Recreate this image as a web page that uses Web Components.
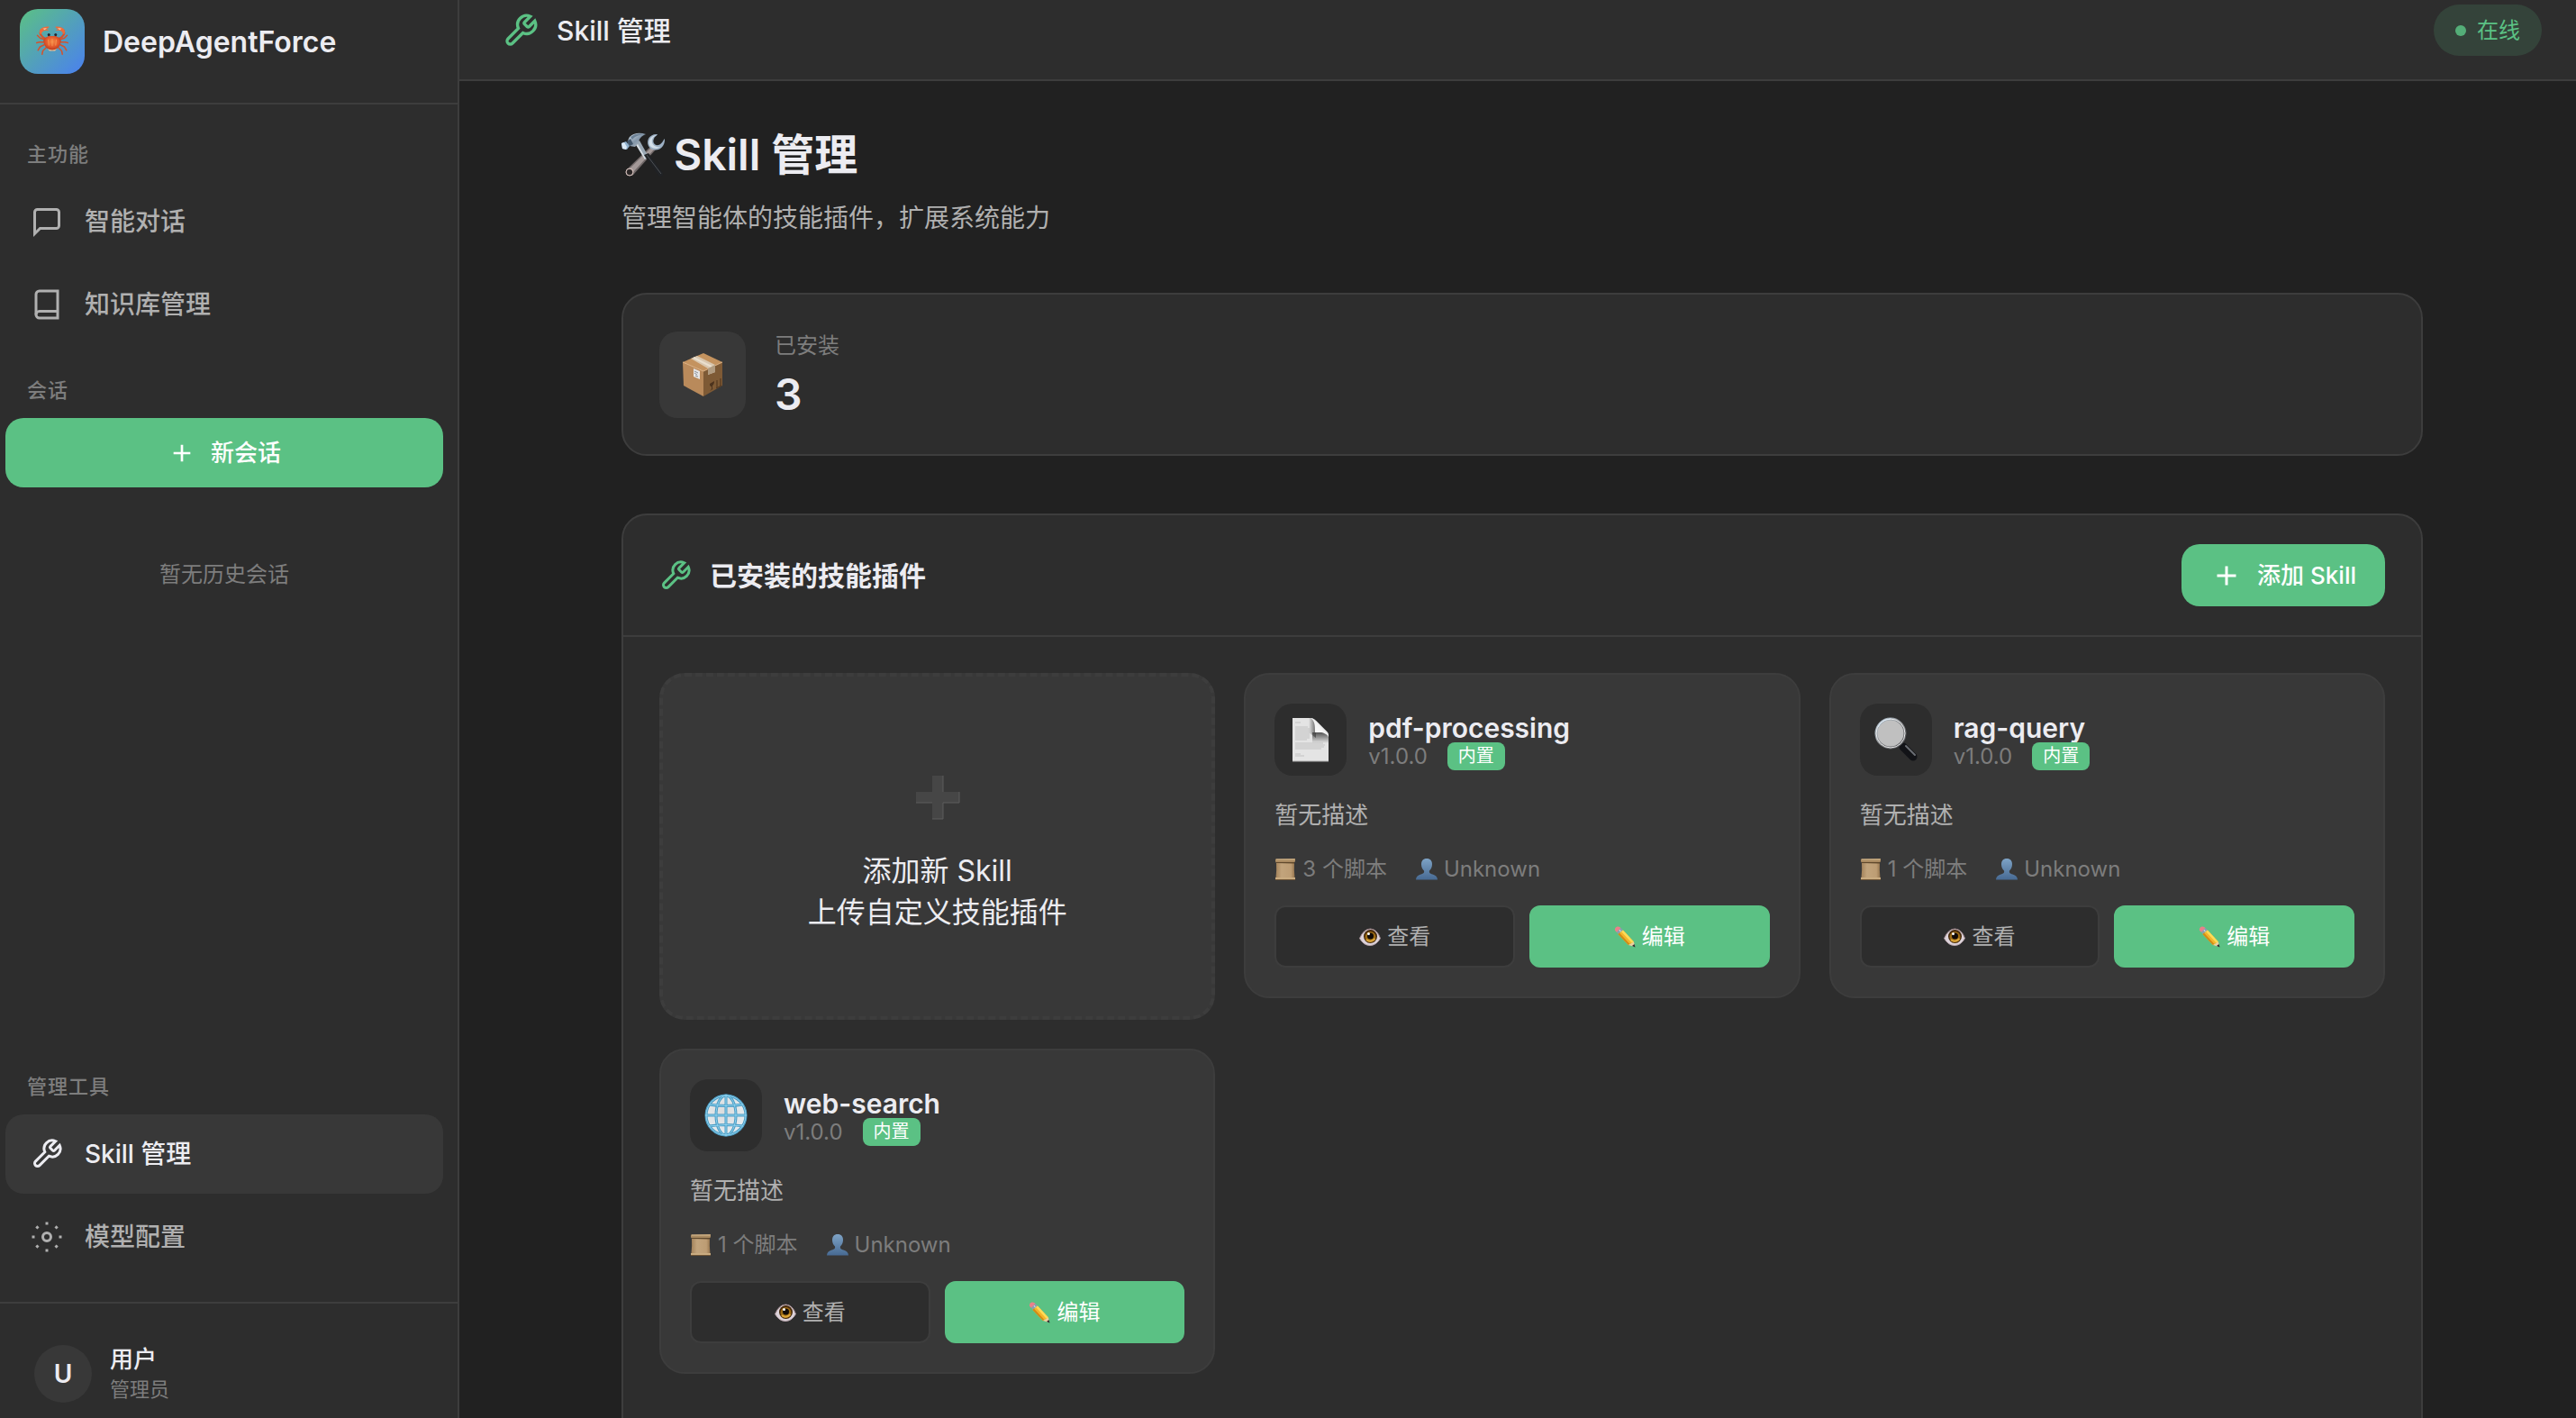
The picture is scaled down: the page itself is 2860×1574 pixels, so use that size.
<!DOCTYPE html>
<html lang="zh-CN">
<head>
<meta charset="UTF-8">
<meta name="viewport" content="width=device-width, initial-scale=1.0">
<title>DeepAgentForce</title>
<style>
    :root {
        --bg: #212121;
        --panel: #2d2d2d;
        --raised: #383838;
        --line: #3d3d3d;
        --text: #ececf1;
        --text-2: #b0b0b0;
        --text-3: #7d7d7d;
        --green: #5bc184;
    }

    body {
        margin: 0;
        background: var(--bg);
        color: var(--text);
        font-family: Inter, "Noto Sans CJK SC", sans-serif;
        font-size: 28px;
    }
</style>
</head>
<body>
<app-shell></app-shell>

<script>
// line icons, 24 x 24
const LINE_ICONS = {
    chat: '<path d="M21 15a2 2 0 0 1-2 2H7l-4 4V5a2 2 0 0 1 2-2h14a2 2 0 0 1 2 2z"/>',
    book: '<path d="M4 19.5A2.5 2.5 0 0 1 6.5 17H20"/><path d="M6.5 2H20v20H6.5A2.5 2.5 0 0 1 4 19.5v-15A2.5 2.5 0 0 1 6.5 2z"/>',
    plus: '<path d="M12 5v14M5 12h14"/>',
    wrench: '<path d="M14.7 6.3a1 1 0 0 0 0 1.4l1.6 1.6a1 1 0 0 0 1.4 0l3.77-3.77a6 6 0 0 1-7.94 7.94l-6.91 6.91a2.12 2.12 0 0 1-3-3l6.91-6.91a6 6 0 0 1 7.94-7.94l-3.76 3.76z"/>',
    gear: '<circle cx="12" cy="12" r="3"/><path d="M12 1v2M12 21v2M4.22 4.22l1.42 1.42M18.36 18.36l1.42 1.42M1 12h2M21 12h2M4.22 19.78l1.42-1.42M18.36 5.64l1.42-1.42"/>'
};

// coloured pictures, 48 x 48
const PICTURES = {
    crab: `
        <defs><radialGradient id="shell" cx=".5" cy=".4" r=".6"><stop offset="0" stop-color="#f58a45"/><stop offset=".6" stop-color="#e2582c"/><stop offset="1" stop-color="#b5391d"/></radialGradient></defs>
        <g fill="none" stroke="#d4522d" stroke-width="2" stroke-linecap="round" stroke-linejoin="round">
            <path d="M12 21L6 19L2 15M11 25H5L1 26M12 29L6 32L3 37M15 33L10 38L9 43M36 21L42 19L46 15M37 25H43L47 26M36 29L42 32L45 37M33 33L38 38L39 43"/>
            <path d="M14 20C8 17 5 13 7 8M34 20C40 17 43 13 41 8" stroke-width="3"/>
        </g>
        <path d="M6 13C3 7 9 1 19 2C20 4 16 5 15 6C18 6 19 7 18 8C12 7 9 9 8 13ZM42 13C45 7 39 1 29 2C28 4 32 5 33 6C30 6 29 7 30 8C36 7 39 9 40 13Z" fill="#ee6b3a"/>
        <path d="M10 5l6-1-3 3zM38 5l-6-1 3 3z" fill="#f9c9a0"/>
        <path d="M19 20v-5M29 20v-5" stroke="#b5391d" stroke-width="2"/>
        <circle cx="19" cy="14" r="2" fill="#26262e"/><circle cx="29" cy="14" r="2" fill="#26262e"/>
        <path d="M11 23C12 18 17 16 24 16S36 18 37 23C37 30 31 37 24 37S11 30 11 23Z" fill="url(#shell)"/>
        <path d="M18 21l1 9M24 20v11M30 21l-1 9" stroke="#f9a05c" stroke-width="1"/>
        <path d="M17 35C21 37 27 37 31 35L28 38H20Z" fill="#f2b98c"/>`,
    tools: `
        <defs><linearGradient id="steel" x1="0" y1="0" x2="1" y2="1"><stop offset="0" stop-color="#dde6ee"/><stop offset=".5" stop-color="#8295a8"/><stop offset="1" stop-color="#c3c8cd"/></linearGradient></defs>
        <path d="M33 14L38 18L14 45C12 48 7 48 5 45C4 42 6 40 8 38Z" fill="#716969"/>
        <path d="M34 15L37 17L13 43L8 40Z" fill="#a39998"/>
        <path d="M40 1C32 0 27 7 30 14C33 20 42 20 46 14C48 11 48 8 48 6C46 8 45 12 41 13C37 14 34 10 36 6C37 3 39 3 40 1Z" fill="#9cb0c4"/>
        <path d="M39 2C34 2 29 7 31 13C33 17 39 18 43 15C37 16 33 12 34 7C35 4 37 3 39 2Z" fill="#d3dfe9"/>
        <circle cx="9" cy="43" r="3" fill="#2b2626"/><circle cx="9" cy="43" r="4" fill="none" stroke="#d2bdb8" stroke-width="1"/>
        <path d="M15 11L20 8L30 26L26 29Z" fill="#9aa8b4"/><path d="M15 11L17 10L27 28L26 29Z" fill="#d8dfe5"/>
        <path d="M25 24L30 22L46 44C47 48 43 49 41 47Z" fill="#202225"/><path d="M28 24L44 45" stroke="#4d5156" stroke-width="1"/>
        <path d="M9 4C14 -1 21 -1 27 1C22 3 19 6 19 11L15 15L9 14C6 12 7 7 9 4Z" fill="url(#steel)"/>
        <path d="M10 4C15 0 20 0 25 1C18 2 14 4 12 7Z" fill="#6b8095"/>
        <path d="M0 11L5 9L9 14L6 18L1 17Z" fill="#8fb0cd"/><path d="M0 11L3 10L6 15L5 18L1 17Z" fill="#dbeaf7"/>
        <path d="M6 9L10 6L13 12L9 14Z" fill="#42566a"/>`,
    box: `
        <path d="M2 10L25 20V48L3 36Z" fill="#b98a5b"/>
        <path d="M25 20L46 10V36L25 48Z" fill="#7e5a35"/>
        <path d="M2 10L25 0L46 10L25 20Z" fill="#c4935f"/>
        <path d="M2 10L25 20L46 10" fill="none" stroke="#dfb487" stroke-width="1"/>
        <path d="M11 6L18 3L38 13V21L30 24V17Z" fill="#d9c7af"/>
        <path d="M14 5L34 15" stroke="#eadfce" stroke-width="2"/>
        <path d="M30 17L38 13V21L30 24Z" fill="#b09b80"/>
        <path d="M14 17L21 20V29L14 26Z" fill="#e6e6e6"/>
        <path d="M15 20l4 2M15 22l3 2M16 25l3 1" stroke="#8a8f96" stroke-width="1"/>
        <path d="M32 34L37 31C37 35 35 36 35 36V40L37 39L32 42L34 40V37C32 37 32 35 32 34Z" fill="#4c331d"/>
        <path d="M40 30v8M44 28v8M39 39l6-3" stroke="#4c331d" stroke-width="1"/>`,
    page: `
        <defs>
            <linearGradient id="left" x1="0" y1="0" x2="1" y2="0"><stop offset="0" stop-color="#444" stop-opacity="0"/><stop offset="1" stop-color="#444" stop-opacity=".8"/></linearGradient>
            <linearGradient id="below" x1="0" y1="0" x2="0" y2="1"><stop offset="0" stop-color="#444" stop-opacity=".9"/><stop offset="1" stop-color="#444" stop-opacity="0"/></linearGradient>
            <linearGradient id="flap" x1="0" y1="1" x2="1" y2="0"><stop offset="0" stop-color="#fff"/><stop offset=".5" stop-color="#f4f4f4"/><stop offset="1" stop-color="#aaa"/></linearGradient>
        </defs>
        <path d="M4 0H23C26 0 28 1 30 3L42 15C44 17 44 19 44 22V48H4Z" fill="#e4e4e4"/>
        <path d="M7 5h6M7 10h14M7 12h16M7 14h16M7 16h16M7 18h16M7 20h16M7 22h16M7 24h13M7 28h31M7 30h33M7 32h32M7 34h29M7 40h6M7 42h10" stroke="#c2c2c2" stroke-width="1"/>
        <path d="M22 0C26 0 28 1 30 3V22L22 16Z" fill="url(#left)"/>
        <path d="M26 16H42C44 18 44 20 44 28H26Z" fill="url(#below)"/>
        <path d="M24 0C29 3 29 9 29 16C36 15 42 17 44 21C44 18 44 17 42 15L30 3C28 1 26 0 24 0Z" fill="url(#flap)"/>
        <path d="M4 48H44" stroke="#a8a8a8" stroke-width="1"/>`,
    lens: `
        <defs><linearGradient id="rim" x1="0" y1="0" x2="1" y2="1"><stop offset="0" stop-color="#b9cad8"/><stop offset=".5" stop-color="#85878a"/><stop offset="1" stop-color="#4a4b4f"/></linearGradient></defs>
        <path d="M29 29L34 34" stroke="#a3a7ac" stroke-width="5"/>
        <path d="M32 32L43 43" stroke="#121317" stroke-width="9" stroke-linecap="round"/>
        <path d="M35 31L45 41" stroke="#6b6e74" stroke-width="2" stroke-linecap="round"/>
        <circle cx="18" cy="17" r="16" fill="#c0c0c0"/>
        <circle cx="18" cy="17" r="16" fill="none" stroke="url(#rim)" stroke-width="3"/>
        <circle cx="18" cy="17" r="16" fill="none" stroke="#ececec" stroke-width="1"/>
        <path d="M4 10A16 16 0 0 1 18 1" fill="none" stroke="#dbe9f5" stroke-width="1"/>`,
    globe: `
        <defs><radialGradient id="sea" cx=".45" cy=".4" r=".6"><stop offset="0" stop-color="#dcdcdc"/><stop offset="1" stop-color="#e6edf1"/></radialGradient></defs>
        <circle cx="24" cy="24" r="23" fill="url(#sea)"/>
        <g fill="none" stroke="#4b9cc4" stroke-width="3">
            <circle cx="24" cy="24" r="22"/><ellipse cx="24" cy="24" rx="11" ry="22"/>
            <path d="M24 1V47M1 24H47M5 12Q24 15 43 12M5 36Q24 33 43 36"/>
        </g>
        <g fill="none" stroke="#8fd3ef" stroke-width="1">
            <circle cx="24" cy="24" r="22"/><ellipse cx="24" cy="24" rx="11" ry="22"/>
            <path d="M24 1V47M1 24H47M5 12Q24 15 43 12M5 36Q24 33 43 36"/>
        </g>`,
    scroll: `
        <defs><linearGradient id="paper"><stop offset="0" stop-color="#a3825a"/><stop offset=".3" stop-color="#c2a47c"/><stop offset=".8" stop-color="#bd9d74"/><stop offset="1" stop-color="#94734c"/></linearGradient></defs>
        <path d="M4 8H44Q43 25 45 43H3Q5 25 4 8Z" fill="url(#paper)"/>
        <path d="M2 1L46 0V5Q46 9 42 9H6Q2 9 2 6Z" fill="#a98a61"/>
        <path d="M4 8H44V11L4 10Z" fill="#5f482c"/><path d="M4 2L45 2" stroke="#d6bb92" stroke-width="2"/>
        <path d="M2 42H46V47H2Z" fill="#c9ab80"/><path d="M2 47H46" stroke="#6f5535" stroke-width="2"/>`,
    person: `
        <defs><linearGradient id="blue" x1="0" y1="0" x2="0" y2="1"><stop offset="0" stop-color="#7ea3c6"/><stop offset="1" stop-color="#476a93"/></linearGradient></defs>
        <path d="M24 0C32 0 36 5 36 13C36 20 33 24 30 27C29 32 31 33 37 35C44 37 48 41 48 47H0C0 41 4 37 11 35C17 33 19 32 18 27C15 24 12 20 12 13C12 5 16 0 24 0Z" fill="url(#blue)"/>`,
    eye: `
        <path d="M1 27Q10 6 25 6Q40 7 47 27Q38 43 24 43Q10 43 1 27Z" fill="#dcd3da"/>
        <path d="M1 27Q10 6 25 6Q40 7 47 27" fill="none" stroke="#9a8288" stroke-width="2"/>
        <path d="M1 27Q10 43 24 43Q38 43 47 27" fill="none" stroke="#b3a0a7" stroke-width="2"/>
        <circle cx="25" cy="23" r="15" fill="#45290c"/><circle cx="25" cy="24" r="12" fill="#9c6b15"/>
        <path d="M16 30Q25 38 35 28" fill="none" stroke="#dca63a" stroke-width="4"/>
        <circle cx="25" cy="22" r="7" fill="#120b08"/><circle cx="21" cy="17" r="3" fill="#fff"/>`,
    pencil: `
        <path d="M2 9Q1 3 7 1Q12 0 15 4L9 14Q4 14 2 9Z" fill="#e9818a"/>
        <path d="M15 4L20 9L9 18L6 13Z" fill="#8c9db0"/><path d="M12 8L15 13" stroke="#dbe3ea" stroke-width="2"/>
        <path d="M20 9L44 35L32 42L9 18Z" fill="#f4b62c"/>
        <path d="M20 9L44 35L40 38L16 12Z" fill="#ffdb58"/><path d="M9 18L32 42L35 40L12 15Z" fill="#d08a17"/>
        <path d="M44 35L46 46L32 42Z" fill="#f0cf9f"/><path d="M45 40L47 47L40 44Z" fill="#2c2c30"/>`,
    cross: `
        <path d="M18 0H30V18H48V30H30V48H18V30H0V18H18Z" fill="#464646"/>
        <path d="M0 30H18M30 30H48V18M18 48H30V30M30 0V18" fill="none" stroke="#5c5c5c" stroke-width="1"/>`
};

class LineIcon extends HTMLElement {
    constructor() {
        super();
        this.shadowDOM = this.attachShadow({mode: "open"});
    }

    connectedCallback() {
        this.shadowDOM.innerHTML = `
        <style>
            :host { display: block; flex: none; width: 36px; height: 36px; }
            svg { display: block; width: 100%; height: 100%; fill: none; stroke: currentColor; stroke-width: 2; }
        </style>
        <svg viewBox="0 0 24 24" aria-hidden="true">${LINE_ICONS[this.getAttribute("name")]}</svg>
        `;
    }
}
customElements.define("line-icon", LineIcon);

class ColorIcon extends HTMLElement {
    constructor() {
        super();
        this.shadowDOM = this.attachShadow({mode: "open"});
    }

    connectedCallback() {
        this.shadowDOM.innerHTML = `
        <style>
            :host { display: block; flex: none; width: 48px; height: 48px; }
            svg { display: block; width: 100%; height: 100%; overflow: visible; }
        </style>
        <svg viewBox="0 0 48 48" aria-hidden="true">${PICTURES[this.getAttribute("name")]}</svg>
        `;
    }
}
customElements.define("color-icon", ColorIcon);

class NavItem extends HTMLElement {
    constructor() {
        super();
        this.shadowDOM = this.attachShadow({mode: "open"});
    }

    connectedCallback() {
        this.shadowDOM.innerHTML = `
        <style>
            :host { display: block; }
            a {
                display: flex;
                align-items: center;
                gap: 24px;
                padding: 22px 28px;
                border-radius: 20px;
                color: var(--text-2);
                font-weight: 500;
                line-height: 44px;
                text-decoration: none;
            }
            :host([active]) a { background: var(--raised); color: var(--text); }
        </style>
        <a href="#"><line-icon name="${this.getAttribute("icon")}"></line-icon><slot></slot></a>
        `;
    }
}
customElements.define("nav-item", NavItem);

class AppSidebar extends HTMLElement {
    constructor() {
        super();
        this.shadowDOM = this.attachShadow({mode: "open"});
    }

    connectedCallback() {
        this.render();
    }

    render() {
        this.shadowDOM.innerHTML = `
        <style>
            * { box-sizing: border-box; }
            :host {
                display: flex;
                flex-direction: column;
                box-sizing: border-box;
                background: var(--panel);
                border-right: 2px solid var(--line);
            }
            .brand {
                display: flex;
                align-items: center;
                gap: 20px;
                padding: 10px 22px 32px;
                border-bottom: 2px solid var(--line);
                font-size: 32px;
                font-weight: 600;
            }
            .logo {
                display: grid;
                place-items: center;
                width: 72px;
                height: 72px;
                border-radius: 20px;
                background: linear-gradient(135deg, var(--green), #4a80f0);
            }
            .logo color-icon { width: 36px; height: 36px; }
            nav {
                flex: 1;
                display: flex;
                flex-direction: column;
                padding: 38px 16px 28px 6px;
            }
            h2 {
                margin: 0;
                padding: 0 24px;
                color: var(--text-3);
                font-size: 22px;
                font-weight: 500;
                letter-spacing: 1px;
                line-height: 34px;
            }
            section { display: flex; flex-direction: column; gap: 4px; }
            section h2 { margin-bottom: 10px; }
            .sessions { flex: 1; gap: 0; padding-top: 34px; }
            .sessions h2 { margin-bottom: 14px; }
            button {
                display: flex;
                align-items: center;
                justify-content: center;
                gap: 16px;
                padding: 19px;
                border: 0;
                border-radius: 20px;
                background: var(--green);
                color: #fff;
                font: inherit;
                font-size: 26px;
                font-weight: 500;
                line-height: 39px;
            }
            button line-icon { width: 32px; height: 32px; }
            .empty {
                margin: 0;
                padding: 78px 0;
                color: var(--text-3);
                font-size: 24px;
                line-height: 38px;
                text-align: center;
            }
            footer {
                display: flex;
                align-items: center;
                gap: 20px;
                padding: 45px 38px 16px;
                border-top: 2px solid var(--line);
            }
            .avatar {
                display: grid;
                place-items: center;
                width: 64px;
                height: 64px;
                border-radius: 50%;
                background: var(--raised);
                font-size: 28px;
                font-weight: 600;
            }
            .name { font-size: 26px; font-weight: 500; line-height: 34px; }
            .role { color: var(--text-3); font-size: 22px; line-height: 32px; }
        </style>
        <div class="brand"><span class="logo"><color-icon name="crab"></color-icon></span>DeepAgentForce</div>
        <nav>
            <section>
                <h2>主功能</h2>
                <nav-item icon="chat">智能对话</nav-item>
                <nav-item icon="book">知识库管理</nav-item>
            </section>
            <section class="sessions">
                <h2>会话</h2>
                <button type="button"><line-icon name="plus"></line-icon>新会话</button>
                <p class="empty">暂无历史会话</p>
            </section>
            <section>
                <h2>管理工具</h2>
                <nav-item icon="wrench" active>Skill 管理</nav-item>
                <nav-item icon="gear">模型配置</nav-item>
            </section>
        </nav>
        <footer>
            <span class="avatar">U</span>
            <div>
                <div class="name">用户</div>
                <div class="role">管理员</div>
            </div>
        </footer>
        `;
    }
}
customElements.define("app-sidebar", AppSidebar);

class TopBar extends HTMLElement {
    constructor() {
        super();
        this.shadowDOM = this.attachShadow({mode: "open"});
    }

    connectedCallback() {
        this.shadowDOM.innerHTML = `
        <style>
            :host {
                display: flex;
                align-items: center;
                justify-content: space-between;
                padding: 5px 38px 26px 48px;
                background: var(--panel);
                border-bottom: 2px solid var(--line);
            }
            .title {
                display: flex;
                align-items: center;
                gap: 20px;
                font-size: 30px;
                font-weight: 500;
                line-height: 40px;
            }
            .title line-icon { width: 40px; height: 40px; color: var(--green); }
            .status {
                display: flex;
                align-items: center;
                gap: 12px;
                padding: 0 24px;
                border-radius: 32px;
                background: rgba(91, 193, 132, 0.15);
                color: var(--green);
                font-size: 24px;
                line-height: 57px;
            }
            .dot { width: 12px; height: 12px; border-radius: 50%; background: var(--green); opacity: 0.85; }
        </style>
        <div class="title"><line-icon name="wrench"></line-icon><slot></slot></div>
        <div class="status"><span class="dot"></span>在线</div>
        `;
    }
}
customElements.define("top-bar", TopBar);

class StatCard extends HTMLElement {
    constructor() {
        super();
        this.shadowDOM = this.attachShadow({mode: "open"});
    }

    connectedCallback() {
        this.shadowDOM.innerHTML = `
        <style>
            :host {
                display: flex;
                align-items: center;
                gap: 32px;
                padding: 40px;
                background: var(--panel);
                border: 2px solid var(--line);
                border-radius: 28px;
            }
            .icon {
                display: grid;
                place-items: center;
                width: 96px;
                height: 96px;
                border-radius: 20px;
                background: var(--raised);
            }
            .label { color: var(--text-3); font-size: 24px; line-height: 33px; }
            .value { padding-top: 12px; font-size: 48px; font-weight: 600; line-height: 52px; }
        </style>
        <span class="icon"><color-icon name="${this.getAttribute("icon")}"></color-icon></span>
        <div>
            <div class="label">${this.getAttribute("label")}</div>
            <div class="value"><slot></slot></div>
        </div>
        `;
    }
}
customElements.define("stat-card", StatCard);

class SkillCard extends HTMLElement {
    constructor() {
        super();
        this.shadowDOM = this.attachShadow({mode: "open"});
    }

    connectedCallback() {
        this.render();
    }

    render() {
        this.shadowDOM.innerHTML = `
        <style>
            :host {
                display: block;
                padding: 32px;
                background: var(--raised);
                border: 2px solid var(--line);
                border-radius: 28px;
            }
            .head { display: flex; gap: 24px; height: 80px; }
            .icon {
                display: grid;
                place-items: center;
                width: 80px;
                height: 80px;
                border-radius: 20px;
                background: var(--panel);
            }
            h3 { margin: 0; padding-top: 11px; font-size: 30px; font-weight: 600; line-height: 32px; }
            .version { display: flex; align-items: center; gap: 22px; color: var(--text-3); font-size: 24px; line-height: 31px; }
            .badge { padding: 0 12px; border-radius: 8px; background: var(--green); color: #fff; font-size: 20px; }
            p { margin: 24px 0 22px; color: var(--text-2); font-size: 26px; line-height: 40px; }
            .meta { display: flex; gap: 32px; color: var(--text-3); font-size: 24px; line-height: 36px; }
            .meta span { display: flex; align-items: center; gap: 7px; }
            .meta color-icon, button color-icon { width: 24px; height: 24px; }
            .actions { display: grid; grid-template-columns: 1fr 1fr; gap: 16px; margin-top: 22px; }
            button {
                display: flex;
                align-items: center;
                justify-content: center;
                gap: 7px;
                padding: 0;
                border: 2px solid var(--line);
                border-radius: 12px;
                background: var(--panel);
                color: var(--text-2);
                font: inherit;
                font-size: 24px;
                line-height: 65px;
            }
            button.edit { border-color: var(--green); background: var(--green); color: #fff; }
        </style>
        <div class="head">
            <span class="icon"><color-icon name="${this.getAttribute("icon")}"></color-icon></span>
            <div>
                <h3>${this.getAttribute("name")}</h3>
                <div class="version">v1.0.0<span class="badge">内置</span></div>
            </div>
        </div>
        <p><slot></slot></p>
        <div class="meta">
            <span><color-icon name="scroll"></color-icon>${this.getAttribute("scripts")} 个脚本</span>
            <span><color-icon name="person"></color-icon>Unknown</span>
        </div>
        <div class="actions">
            <button type="button"><color-icon name="eye"></color-icon>查看</button>
            <button type="button" class="edit"><color-icon name="pencil"></color-icon>编辑</button>
        </div>
        `;
    }
}
customElements.define("skill-card", SkillCard);

class SkillPanel extends HTMLElement {
    constructor() {
        super();
        this.shadowDOM = this.attachShadow({mode: "open"});
    }

    connectedCallback() {
        this.render();
    }

    render() {
        this.shadowDOM.innerHTML = `
        <style>
            :host {
                display: block;
                background: var(--panel);
                border: 2px solid var(--line);
                border-radius: 28px;
            }
            header {
                display: flex;
                align-items: center;
                justify-content: space-between;
                padding: 32px 40px;
                border-bottom: 2px solid var(--line);
            }
            h2 {
                display: flex;
                align-items: center;
                gap: 20px;
                margin: 0;
                font-size: 30px;
                font-weight: 600;
                line-height: 40px;
            }
            h2 line-icon { color: var(--green); }
            .add {
                display: flex;
                align-items: center;
                gap: 16px;
                padding: 0 32px;
                border: 0;
                border-radius: 20px;
                background: var(--green);
                color: #fff;
                font: inherit;
                font-size: 26px;
                font-weight: 500;
                line-height: 69px;
            }
            .grid {
                display: grid;
                grid-template-columns: repeat(3, 1fr);
                align-items: start;
                gap: 32px;
                padding: 40px 40px 80px;
            }
            .upload {
                display: flex;
                flex-direction: column;
                align-items: center;
                padding: 110px 40px 92px;
                border: 4px dashed var(--line);
                border-radius: 28px;
                background: var(--raised);
                color: var(--text);
                font: inherit;
                font-size: 32px;
                line-height: 46px;
            }
            .upload color-icon { margin-bottom: 35px; }
        </style>
        <header>
            <h2><line-icon name="wrench"></line-icon>已安装的技能插件</h2>
            <button type="button" class="add"><line-icon name="plus"></line-icon>添加 Skill</button>
        </header>
        <div class="grid">
            <button type="button" class="upload">
                <color-icon name="cross"></color-icon>
                <span>添加新 Skill</span>
                <span>上传自定义技能插件</span>
            </button>
            <slot></slot>
        </div>
        `;
    }
}
customElements.define("skill-panel", SkillPanel);

class AppShell extends HTMLElement {
    constructor() {
        super();
        this.shadowDOM = this.attachShadow({mode: "open"});
    }

    connectedCallback() {
        this.render();
    }

    render() {
        this.shadowDOM.innerHTML = `
        <style>
            :host {
                display: grid;
                grid-template-columns: 510px 1fr;
                grid-template-rows: minmax(0, 1fr);
                height: 100vh;
                overflow: hidden;
            }
            main { min-width: 0; }
            .content { max-width: 2000px; margin: 0 auto; }
            .scroll { padding: 48px 40px 0 50px; }
            h1 {
                display: flex;
                align-items: center;
                gap: 10px;
                margin: 0;
                font-size: 48px;
                font-weight: 600;
                line-height: 68px;
            }
            .lead { margin: 14px 0 61px; color: var(--text-2); font-size: 28px; line-height: 44px; }
            skill-panel { margin-top: 64px; }
        </style>
        <app-sidebar></app-sidebar>
        <main>
            <top-bar>Skill 管理</top-bar>
            <div class="scroll">
                <div class="content">
                    <h1><color-icon name="tools"></color-icon>Skill 管理</h1>
                    <p class="lead">管理智能体的技能插件，扩展系统能力</p>
                    <stat-card icon="box" label="已安装">3</stat-card>
                    <skill-panel>
                        <skill-card icon="page" name="pdf-processing" scripts="3">暂无描述</skill-card>
                        <skill-card icon="lens" name="rag-query" scripts="1">暂无描述</skill-card>
                        <skill-card icon="globe" name="web-search" scripts="1">暂无描述</skill-card>
                    </skill-panel>
                </div>
            </div>
        </main>
        `;
    }
}
customElements.define("app-shell", AppShell);
</script>
</body>
</html>
